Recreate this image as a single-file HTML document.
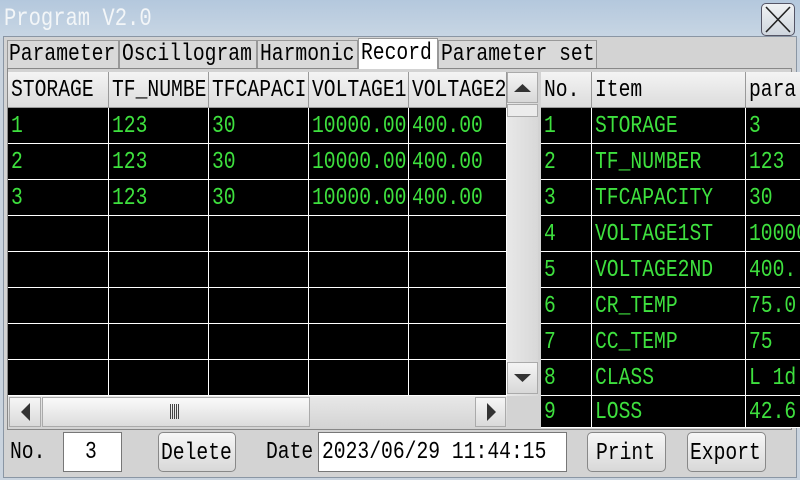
<!DOCTYPE html>
<html><head><meta charset="utf-8"><style>
*{margin:0;padding:0;box-sizing:border-box}
body{width:800px;height:480px;overflow:hidden;background:#c9d3de;font-family:"Liberation Mono","Noto Sans CJK SC",monospace;position:relative}
.a{position:absolute}
.t{font-size:24px;white-space:nowrap;transform:scaleX(0.82);transform-origin:0 50%;line-height:36px}
#title{left:0;top:0;width:800px;height:38px;background:linear-gradient(#b4c8dd,#c8d6e4)}
#body{left:3px;top:36px;width:794px;height:442px;background:#d3d3d3;border:1px solid #8a96a4}
.tab{top:40px;height:28px;background:#d9d9d9;border:1px solid #999;border-bottom:none}
.tab span{line-height:28px}
.cell{border-right:1px solid #fff;border-bottom:1px solid #fff;color:#3ee03e;padding-left:3px;overflow:hidden}
.hd{background:linear-gradient(#f4f4f4,#dcdcdc);color:#000;border-right:1px solid #999;border-bottom:1px solid #999}
.btn{top:432px;height:40px;border:1px solid #888;border-radius:5px;background:linear-gradient(#f7f7f7,#d8d8d8);}
.btn span,.lbl span{line-height:42px}
</style></head><body>
<div id="title" class="a"></div>
<div class="a t" style="left:4px;top:1px;color:#f3f6f8;font-size:25px;">Program V2.0</div>
<div class="a" style="left:761px;top:3px;width:34px;height:33px;border:1px solid #556;border-radius:5px;background:linear-gradient(#f0f2f4,#cfd6de)">
<svg width="32" height="31"><path d="M4 3L28 28M28 3L4 28" stroke="#222" stroke-width="1.6"/></svg></div>
<div id="body" class="a"></div>
<div class="a tab" style="left:7px;width:112px"><span class="t a" style="left:1px">Parameter</span></div>
<div class="a tab" style="left:119px;width:138px"><span class="t a" style="left:2px">Oscillogram</span></div>
<div class="a tab" style="left:257px;width:101px"><span class="t a" style="left:2px">Harmonic</span></div>
<div class="a tab" style="left:358px;width:80px;top:38px;height:31px;background:#fff;z-index:2"><span class="t a" style="left:2px;top:1px">Record</span></div>
<div class="a tab" style="left:438px;width:159px"><span class="t a" style="left:2px">Parameter set</span></div>
<div class="a" style="left:7px;top:68px;width:785px;height:362px;border:1px solid #888;background:#d3d3d3"></div>
<div class="a" style="left:8px;top:72px;width:499px;height:324px;background:#000"></div>
<div id="L"></div>
<div class="a" style="left:507px;top:72px;width:31px;height:324px;background:linear-gradient(90deg,#e8e8e8,#d8d8d8)"></div>
<div class="a" style="left:507px;top:72px;width:31px;height:31px;border:1px solid #aaa;background:linear-gradient(#f4f4f4,#d8d8d8)"><svg width="29" height="29"><path d="M6 19L14.5 11L23 19Z" fill="#333"/></svg></div>
<div class="a" style="left:507px;top:104px;width:31px;height:13px;border:1px solid #aaa;background:#ececec"></div>
<div class="a" style="left:507px;top:362px;width:31px;height:32px;border:1px solid #aaa;background:linear-gradient(#f4f4f4,#d8d8d8)"><svg width="29" height="30"><path d="M6 11L14.5 19L23 11Z" fill="#333"/></svg></div>
<div class="a" style="left:8px;top:396px;width:499px;height:32px;background:linear-gradient(#e8e8e8,#d4d4d4)"></div>
<div class="a" style="left:9px;top:397px;width:32px;height:30px;border:1px solid #aaa;background:linear-gradient(#f6f6f6,#dadada)"><svg width="30" height="28"><path d="M20 5L11 14L20 23Z" fill="#333"/></svg></div>
<div class="a" style="left:42px;top:397px;width:268px;height:30px;border:1px solid #aaa;background:linear-gradient(#fafafa,#dcdcdc)"></div>
<div class="a" style="left:170px;top:404px;width:10px;height:15px;background:repeating-linear-gradient(90deg,#444 0 1px,transparent 1px 2px)"></div>
<div class="a" style="left:475px;top:397px;width:31px;height:30px;border:1px solid #aaa;background:linear-gradient(#f6f6f6,#dadada)"><svg width="29" height="28"><path d="M11 5L20 14L11 23Z" fill="#333"/></svg></div>
<div class="a" style="left:541px;top:72px;width:259px;height:356px;background:#000"></div>
<div id="R"></div>
<div class="a lbl" style="left:10px;top:432px;height:40px"><span class="t a">No.</span></div>
<div class="a" style="left:63px;top:432px;width:59px;height:40px;background:#fff;border:1px solid #777"><span class="t a" style="left:21px;line-height:40px">3</span></div>
<div class="a btn" style="left:158px;width:78px"><span class="t a" style="left:2px">Delete</span></div>
<div class="a lbl" style="left:266px;top:432px;height:40px"><span class="t a">Date</span></div>
<div class="a" style="left:318px;top:432px;width:249px;height:40px;background:#fff;border:1px solid #777"><span class="t a" style="left:3px;line-height:40px">2023/06/29 11:44:15</span></div>
<div class="a btn" style="left:587px;width:79px"><span class="t a" style="left:8px">Print</span></div>
<div class="a btn" style="left:687px;width:79px"><span class="t a" style="left:2px">Export</span></div>
<script>
function cell(x,y,w,h,txt,hd){return '<div class="a cell'+(hd?' hd':'')+'" style="left:'+x+'px;top:'+y+'px;width:'+w+'px;height:'+h+'px"><span class="t a" style="left:3px;top:1px;line-height:'+h+'px">'+txt+'</span></div>';}
var L='',cx=[8,109,209,309,409,507];
var hdr=['STORAGE','TF_NUMBE','TFCAPACI','VOLTAGE1','VOLTAGE2'];
var rows=[['1','123','30','10000.00','400.00'],['2','123','30','10000.00','400.00'],['3','123','30','10000.00','400.00']];
for(var c=0;c<5;c++){L+=cell(cx[c],72,cx[c+1]-cx[c],36,hdr[c],1);
for(var r=0;r<8;r++){var y=108+r*36;L+=cell(cx[c],y,cx[c+1]-cx[c],36,rows[r]?rows[r][c]:'',0);}}
document.getElementById('L').innerHTML=L;
var R='',rx=[541,592,746,820];
var rh=['No.','Item','para'];
var items=['STORAGE','TF_NUMBER','TFCAPACITY','VOLTAGE1ST','VOLTAGE2ND','CR_TEMP','CC_TEMP','CLASS','LOSS'];
var vals=['3','123','30','10000','400.','75.0','75','L 1d','42.6'];
for(var c=0;c<3;c++){R+=cell(rx[c],72,rx[c+1]-rx[c],36,rh[c],1);
for(var r=0;r<9;r++){var y=108+r*36;R+=cell(rx[c],y,rx[c+1]-rx[c],r==8?32:36,[String(r+1),items[r],vals[r]][c],0);}}
document.getElementById('R').innerHTML=R;
</script>
</body></html>
